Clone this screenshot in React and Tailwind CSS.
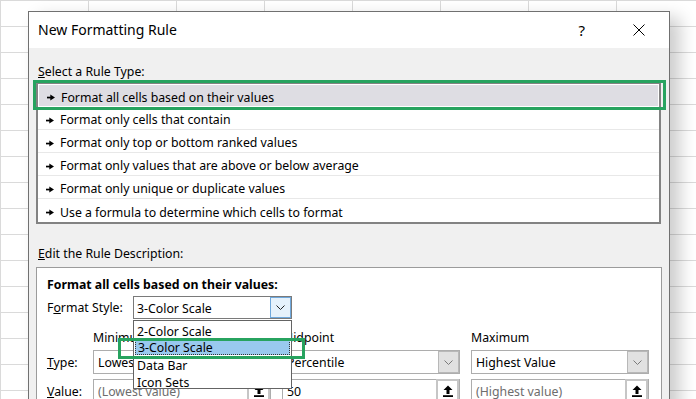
import React from "react";

const Arrow = () => (
  <svg width="8" height="7" viewBox="0 0 8 7" className="shrink-0">
    <rect x="0" y="2.7" width="4" height="1.7" fill="#000" />
    <path d="M3.3 0.6 L8 3.55 L3.3 6.5 Z" fill="#000" />
  </svg>
);

const Chevron = ({ color = "#333" }) => (
  <svg width="9" height="5" viewBox="0 0 9 5">
    <path d="M0.5 0.5 L4.5 4.5 L8.5 0.5" fill="none" stroke={color} strokeWidth="1" />
  </svg>
);

const Upload = () => (
  <svg width="10" height="12" viewBox="0 0 10 12">
    <path d="M5 0.5 L9.5 5 L6.5 5 L6.5 9 L3.5 9 L3.5 5 L0.5 5 Z" fill="#000" />
    <rect x="0" y="10.2" width="10" height="1.8" fill="#000" />
  </svg>
);

const rules = [
  "Format all cells based on their values",
  "Format only cells that contain",
  "Format only top or bottom ranked values",
  "Format only values that are above or below average",
  "Format only unique or duplicate values",
  "Use a formula to determine which cells to format",
];

function Combo({ text }) {
  return (
    <div className="w-[178px] h-[24px] border border-[#adadad] bg-white flex items-center">
      <span className="pl-[4px] pt-[2px] flex-1 text-black">{text}</span>
      <div className="w-[21px] h-[22px] bg-[#e1e1e1] border border-[#b8b8b8] flex items-center justify-center">
        <Chevron color="#7a7a7a" />
      </div>
    </div>
  );
}

function ValueInput({ text, dark }) {
  return (
    <div className="w-[178px] h-[24px] border border-[#adadad] bg-white flex items-center">
      <span className={"pl-[4px] pt-[2px] flex-1 " + (dark ? "text-black" : "text-[#6d6d6d]")}>{text}</span>
      <div className="w-[23px] h-[24px] bg-white border-2 border-[#c6c6c6] flex items-center justify-center">
        <Upload />
      </div>
    </div>
  );
}

export default function App() {
  return (
    <div
      className="relative w-[696px] h-[399px] overflow-hidden bg-white bg-[linear-gradient(to_right,#dadada_1px,transparent_1px),linear-gradient(to_bottom,#dadada_1px,transparent_1px)] bg-[size:88px_26px] pl-[28px] pt-[11px] text-[12.3px] leading-[16px] text-black"
      style={{ fontFamily: '"Noto Sans", sans-serif' }}
    >
      <div className="relative w-[642px] h-[420px] border border-[#707070] bg-[#f0f0f0] shadow-[10px_6px_16px_rgba(0,0,0,0.2)] flex flex-col">
        {/* Title bar */}
        <div className="h-[36px] bg-white flex items-center pl-[9px] shrink-0">
          <span className="text-[14px] leading-[20px]">New Formatting Rule</span>
          <span className="ml-auto mr-[48px] text-[15px] leading-[20px]">?</span>
          <svg width="12" height="12" viewBox="0 0 12 12" className="mr-[24px]">
            <path d="M0.5 0.5 L11.5 11.5 M11.5 0.5 L0.5 11.5" stroke="#000" strokeWidth="1" />
          </svg>
        </div>

        {/* Body */}
        <div className="flex flex-col pt-[16px] pl-[9px]">
          <div className="h-[16px]">
            <span className="underline">S</span>elect a Rule Type:
          </div>
          <div className="mt-[2px] ml-[-2px] w-[625px] border-2 border-[#828282] bg-white flex flex-col">
            {rules.map((r, i) => (
              <div
                key={r}
                className={
                  "h-[23px] flex items-center pl-[8px] pt-[4px] gap-[6px] " +
                  (i === 0 ? "bg-[#dedde3] border border-white" : "") +
                  (i > 0 && i < rules.length - 1 ? " border-b border-[#e8e8e8]" : "")
                }
              >
                <Arrow />
                <span>{r}</span>
              </div>
            ))}
          </div>

          <div className="mt-[22px] h-[16px]">
            <span className="underline">E</span>dit the Rule Description:
          </div>

          <div className="relative mt-[5px] ml-[-2px] w-[626px] h-[140px] border border-[#9b9b9b] bg-white pl-[10px] pt-[9px] flex flex-col">
            <div className="font-bold h-[16px]">Format all cells based on their values:</div>
            <div className="mt-[3px] flex items-center h-[23px]">
              <span className="w-[86px] pt-[1px]">
                F<span className="underline">o</span>rmat Style:
              </span>
              <div className="w-[159px] h-[23px] border border-[#7a7a7a] bg-white flex items-center">
                <span className="pl-[3px] pt-[2px] flex-1">3-Color Scale</span>
                <div className="w-[21px] h-[21px] bg-[#e5f1fb] border border-[#6fa8dc] flex items-center justify-center">
                  <Chevron color="#222" />
                </div>
              </div>
            </div>

            <div className="mt-[11px] flex h-[16px]">
              <div className="w-[46px]" />
              <div className="flex gap-[11px]">
                <div className="w-[178px]">Minimum</div>
                <div className="w-[178px]">Midpoint</div>
                <div className="w-[178px]">Maximum</div>
              </div>
            </div>

            <div className="mt-[4px] flex items-center">
              <div className="w-[46px] pt-[2px]">
                <span className="underline">T</span>ype:
              </div>
              <div className="flex gap-[11px]">
                <Combo text="Lowest Value" />
                <Combo text="Percentile" />
                <Combo text="Highest Value" />
              </div>
            </div>

            <div className="mt-[5px] flex items-center">
              <div className="w-[46px] pt-[2px]">
                <span className="underline">V</span>alue:
              </div>
              <div className="flex gap-[11px]">
                <ValueInput text="(Lowest value)" />
                <ValueInput text="50" dark />
                <ValueInput text="(Highest value)" />
              </div>
            </div>

            {/* Dropdown list */}
            <div className="absolute left-[96px] top-[52px] w-[159px] h-[69px] border border-[#646464] bg-white flex flex-col">
              <div className="h-[17px] flex items-center pl-[3px] pt-[4px]">2-Color Scale</div>
              <div className="h-[17px] flex items-center pl-[2px] pt-[3px] mx-[1px] bg-[#99c9ef] border border-dotted border-[#333]">3-Color Scale</div>
              <div className="h-[17px] flex items-center pl-[3px] pt-[4px]">Data Bar</div>
              <div className="h-[17px] flex items-center pl-[3px] pt-[4px]">Icon Sets</div>
            </div>
          </div>
        </div>
      </div>

      {/* Green highlight boxes */}
      <div className="absolute left-[33px] top-[80px] w-[633px] h-[30px] border-[3px] border-[#27a35f]" />
      <div className="absolute left-[118px] top-[338px] w-[187px] h-[21px] border-[3px] border-[#27a35f]" />
    </div>
  );
}
